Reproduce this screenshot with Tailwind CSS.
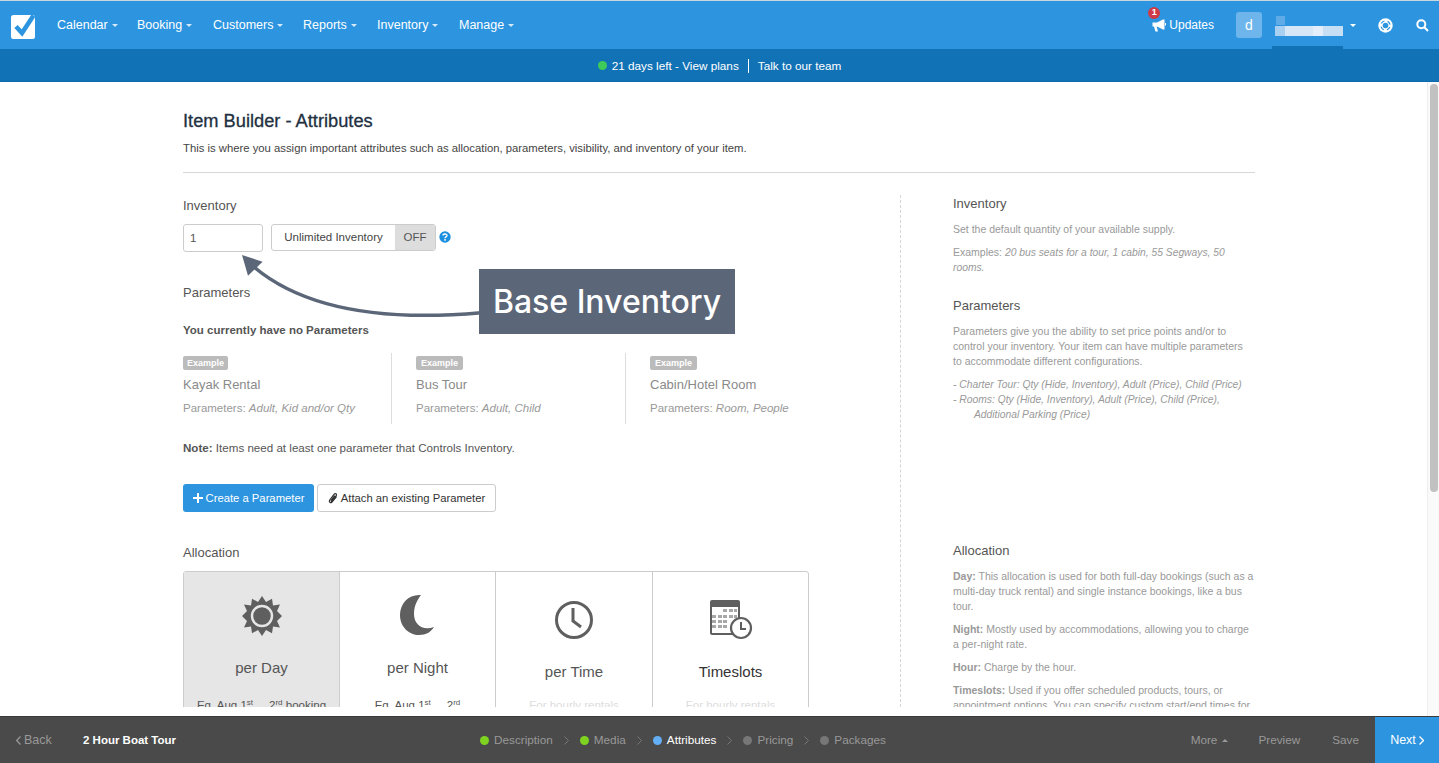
<!DOCTYPE html>
<html lang="en">
  <head>
    <meta charset="UTF-8" />
    <title>Item Builder - Attributes</title>
    <script src="https://cdn.jsdelivr.net/npm/@tailwindcss/browser@4"></script>
  </head>
  <body class="h-[763px] w-[1439px] overflow-hidden bg-white font-['Liberation_Sans',Arial,sans-serif] text-[#555]">
    <div class="relative flex h-[763px] flex-col">
      <!-- TOP NAV -->
      <header class="flex h-[49px] shrink-0 items-center border-t border-[#c9d6e0] border-b-[#2a86c8] bg-[#2d95e0] text-[12.5px] text-white">
        <svg class="ml-[10px] mt-[1px] h-[28px] w-[27px]" viewBox="0 0 27 28">
          <rect x="1" y="3" width="24" height="24" rx="2.5" fill="#fff" />
          <path d="M6 14.5 L12 21 L23.5 3.5" fill="none" stroke="#2d95e0" stroke-width="4.5" />
        </svg>
        <nav class="ml-[20px] flex">
          <a class="flex w-[80px] items-center gap-[4px]">Calendar <i class="mt-[1px] border-x-[3px] border-t-[3px] border-x-transparent border-t-white/80"></i></a>
          <a class="flex w-[76px] items-center gap-[4px]">Booking <i class="mt-[1px] border-x-[3px] border-t-[3px] border-x-transparent border-t-white/80"></i></a>
          <a class="flex w-[90px] items-center gap-[4px]">Customers <i class="mt-[1px] border-x-[3px] border-t-[3px] border-x-transparent border-t-white/80"></i></a>
          <a class="flex w-[74px] items-center gap-[4px]">Reports <i class="mt-[1px] border-x-[3px] border-t-[3px] border-x-transparent border-t-white/80"></i></a>
          <a class="flex w-[82px] items-center gap-[4px]">Inventory <i class="mt-[1px] border-x-[3px] border-t-[3px] border-x-transparent border-t-white/80"></i></a>
          <a class="flex items-center gap-[4px]">Manage <i class="mt-[1px] border-x-[3px] border-t-[3px] border-x-transparent border-t-white/80"></i></a>
        </nav>
        <div class="ml-auto flex h-full items-center">
          <div class="relative flex items-center gap-[3px] text-[12px]">
            <span class="absolute -top-[9px] -left-[4px] flex h-[12px] w-[12px] items-center justify-center rounded-full bg-[#cf3a48] text-[9px] font-bold">1</span>
            <svg class="mt-[1px] h-[13px] w-[14px]" viewBox="0 0 14 13" fill="#fff">
              <path d="M0.5 3.5 H5 L11 0.5 H12.5 V10.5 H11 L5 7.5 H4.6 L6 12.5 H3.4 L2 7.5 H0.5 Z" />
              <rect x="13" y="4" width="1" height="2.5" />
            </svg>
            <span>Updates</span>
          </div>
          <div class="ml-[22px] flex h-[26px] w-[26px] items-center justify-center rounded-[3px] bg-[#6db5ea] text-[14px]">d</div>
          <div class="relative ml-[10px] h-full w-[71px]">
            <div class="absolute top-[15px] left-[4px] h-[9px] w-[9px] bg-[#5fabe8]"></div>
            <div class="absolute top-[25px] left-[3px] flex h-[10px] w-[68px]">
              <div class="w-[10px] bg-[#a9d0f0]"></div>
              <div class="w-[28px] bg-[#d6e7f7]"></div>
              <div class="w-[10px] bg-[#e3eefa]"></div>
              <div class="w-[20px] bg-[#c6dff5]"></div>
            </div>
            <div class="absolute bottom-0 left-0 h-[3px] w-[71px] bg-[#1272b6]"></div>
          </div>
          <i class="ml-[7px] border-x-[3px] border-t-[3px] border-x-transparent border-t-white"></i>
          <svg class="ml-[22px] h-[15px] w-[15px]" viewBox="0 0 15 15">
            <circle cx="7.5" cy="7.5" r="7.2" fill="#fff" />
            <circle cx="7.5" cy="7.5" r="2.8" fill="#2d95e0" />
            <circle cx="7.5" cy="7.5" r="4.6" fill="none" stroke="#2d95e0" stroke-width="1.2" stroke-dasharray="4 3.23" stroke-dashoffset="-1.6" />
          </svg>
          <svg class="mr-[10px] ml-[23px] h-[13px] w-[13px]" viewBox="0 0 13 13" fill="none" stroke="#fff" stroke-width="2">
            <circle cx="5.3" cy="5.3" r="4" />
            <path d="M8.3 8.3 L12 12" />
          </svg>
        </div>
      </header>

      <!-- TRIAL BAR -->
      <div class="flex h-[33px] shrink-0 items-center justify-center border-b border-[#0f6aab] bg-[#1272b6] pt-[1px] text-[11.75px] text-white">
        <span class="mr-[5px] h-[9px] w-[9px] rounded-full bg-[#3ecb5a]"></span>
        <span>21 days left - View plans</span>
        <span class="mx-[9px] h-[14px] w-px bg-white"></span>
        <span>Talk to our team</span>
      </div>

      <!-- MAIN -->
      <div class="relative flex min-h-0 flex-1 bg-white">
        <main class="h-[625px] min-w-0 flex-1 overflow-hidden pt-[28px] pl-[183px]">
          <div class="w-[1072px]">
            <h1 class="text-[18.25px] leading-[22px] text-[#22303f] [-webkit-text-stroke:0.3px_#22303f]">Item Builder - Attributes</h1>
            <p class="mt-[8px] text-[11.3px] leading-[16px] text-[#444]">This is where you assign important attributes such as allocation, parameters, visibility, and inventory of your item.</p>
            <hr class="mt-[16px] border-[#d8d8d8]" />
          </div>

          <div class="mt-[22px] flex">
            <section class="w-[717px]">
              <h3 class="mt-[3px] text-[13px] leading-[16px]">Inventory</h3>
              <div class="mt-[10px] flex items-start">
                <div class="flex h-[28px] w-[80px] items-center rounded-[3px] border border-[#ccc] pl-[6px] pt-[1px] text-[11.5px]">1</div>
                <div class="ml-[8px] flex h-[27px] w-[165px] overflow-hidden rounded-[3px] border border-[#ccc] text-[11.5px]">
                  <span class="flex w-[123px] items-center justify-center text-[#444]">Unlimited Inventory</span>
                  <span class="flex flex-1 items-center justify-center bg-[#ddd]">OFF</span>
                </div>
                <svg class="mt-[7px] ml-[3px] h-[12px] w-[12px]" viewBox="0 0 12 12">
                  <circle cx="6" cy="6" r="5.7" fill="#1b8fe0" />
                  <path d="M4 4.6 C4 2.4 8 2.4 8 4.5 C8 6 6 5.8 6 7.2" fill="none" stroke="#fff" stroke-width="1.4" />
                  <rect x="5.2" y="8.1" width="1.6" height="1.6" fill="#fff" />
                </svg>
              </div>

              <h3 class="mt-[33px] text-[13px] leading-[16px]">Parameters</h3>
              <p class="mt-[21px] text-[11.5px] leading-[16px] font-bold">You currently have no Parameters</p>

              <div class="mt-[15px] flex h-[71px] text-[#999]">
                <div class="w-[208px] pt-[3px]">
                  <span class="block w-fit rounded-[2px] bg-[#bbb] px-[4px] text-[9px] leading-[14px] font-bold text-white">Example</span>
                  <div class="mt-[7px] text-[13px] leading-[16px] text-[#8a8a8a]">Kayak Rental</div>
                  <div class="mt-[7px] text-[11.5px] leading-[16px]">Parameters: <em>Adult, Kid and/or Qty</em></div>
                </div>
                <div class="w-[234px] border-l border-[#ddd] pt-[3px] pl-[24px]">
                  <span class="block w-fit rounded-[2px] bg-[#bbb] px-[5px] text-[9px] leading-[14px] font-bold text-white">Example</span>
                  <div class="mt-[7px] text-[13px] leading-[16px] text-[#8a8a8a]">Bus Tour</div>
                  <div class="mt-[7px] text-[11.5px] leading-[16px]">Parameters: <em>Adult, Child</em></div>
                </div>
                <div class="border-l border-[#ddd] pt-[3px] pl-[24px]">
                  <span class="block w-fit rounded-[2px] bg-[#bbb] px-[5px] text-[9px] leading-[14px] font-bold text-white">Example</span>
                  <div class="mt-[7px] text-[13px] leading-[16px] text-[#8a8a8a]">Cabin/Hotel Room</div>
                  <div class="mt-[7px] text-[11.5px] leading-[16px]">Parameters: <em>Room, People</em></div>
                </div>
              </div>

              <p class="mt-[16px] text-[11.6px] leading-[16px]"><b>Note:</b> Items need at least one parameter that Controls Inventory.</p>

              <div class="mt-[28px] flex gap-[3px] text-[11.25px]">
                <button class="flex h-[28px] w-[131px] items-center justify-center gap-[3px] rounded-[3px] bg-[#2d95e0] text-white">
                  <svg class="h-[10px] w-[10px]" viewBox="0 0 10 10"><path d="M5 0 V10 M0 5 H10" stroke="#fff" stroke-width="2" /></svg>
                  Create a Parameter
                </button>
                <button class="flex h-[28px] w-[179px] items-center justify-center gap-[3px] rounded-[3px] border border-[#ccc] text-[#333]">
                  <svg class="h-[12px] w-[10px]" viewBox="0 0 10 12" fill="none" stroke="#333" stroke-width="1.2">
                    <path d="M8.5 4.5 L4 10 C2.5 11.5 0.5 10 1.7 8 L6 2.4 C7.2 0.8 9.3 2 8.2 3.7 L4.2 8.7 C3.5 9.4 2.8 8.8 3.3 8 L6.8 3.6" />
                  </svg>
                  Attach an existing Parameter
                </button>
              </div>

              <h3 class="mt-[33px] text-[13px] leading-[16px]">Allocation</h3>
              <div class="mt-[10px] grid h-[180px] w-[626px] grid-cols-[155px_156px_157px_1fr] rounded-[3px] border border-[#ccc] text-center">
                <div class="bg-[#e6e6e6] pt-[24px]">
                  <svg class="mx-auto h-[40px] w-[40px]" viewBox="0 0 40 40">
                    <path fill="#5f5f5f" d="M20 0 L24 6 L30 2.7 L31 9.5 L38 8.5 L35 15 L40 20 L35 25 L38 31.5 L31 30.5 L30 37.3 L24 34 L20 40 L16 34 L10 37.3 L9 30.5 L2 31.5 L5 25 L0 20 L5 15 L2 8.5 L9 9.5 L10 2.7 L16 6 Z" />
                    <circle cx="20" cy="20" r="10" fill="#5f5f5f" stroke="#e6e6e6" stroke-width="2.4" />
                  </svg>
                  <div class="mt-[22px] text-[15px] leading-[20px]">per Day</div>
                  <div class="mt-[19px] text-[11.5px] leading-[16px]">Eg. Aug 1<sup class="text-[8px]">st</sup> &nbsp;&nbsp;&nbsp; 2<sup class="text-[8px]">rd</sup> booking</div>
                </div>
                <div class="border-l border-[#ccc] pt-[22px]">
                  <svg class="mx-auto h-[42px] w-[38px]" viewBox="0 0 38 42">
                    <path fill="#5f5f5f" d="M22 1 C10 0 1 9 1 21 C1 33 10 41 20 41 C27 41 32 38 35 33 C24 37 15 31 15 20 C15 11 19 5 22 1 Z" />
                  </svg>
                  <div class="mt-[22px] text-[15px] leading-[20px]">per Night</div>
                  <div class="mt-[19px] text-[11.5px] leading-[16px]">Eg. Aug 1<sup class="text-[8px]">st</sup> &nbsp;&nbsp;&nbsp; 2<sup class="text-[8px]">rd</sup></div>
                </div>
                <div class="border-l border-[#ccc] pt-[28px]">
                  <svg class="mx-auto h-[40px] w-[40px]" viewBox="0 0 40 40" fill="none" stroke="#5f5f5f">
                    <circle cx="20" cy="20" r="17.5" stroke-width="3" />
                    <path d="M19 8 V21 L27 27" stroke-width="3" />
                  </svg>
                  <div class="mt-[22px] text-[15px] leading-[20px]">per Time</div>
                  <div class="mt-[15px] text-[11.5px] leading-[16px] text-[#ddd]">For hourly rentals</div>
                </div>
                <div class="border-l border-[#ccc] pt-[28px]">
                  <svg class="mx-auto h-[40px] w-[44px]" viewBox="0 0 44 40">
                    <rect x="1" y="0" width="30" height="35" rx="2" fill="#5f5f5f" />
                    <rect x="3" y="7" width="26" height="26" fill="#fff" />
                    <path fill="#a8a8a8" d="M14 9h4v3h-4zM20 9h4v3h-4zM25 9h3v3h-3zM3 15h4v3H3zM9 15h4v3H9zM14 15h4v3h-4zM20 15h4v3h-4zM25 15h3v3h-3zM3 20h4v3H3zM9 20h4v3H9zM14 20h4v3h-4zM3 25h4v3H3zM9 25h4v3H9zM14 25h4v3h-4z" />
                    <circle cx="32" cy="28" r="10" fill="#fff" stroke="#5f5f5f" stroke-width="2.2" />
                    <path d="M32 22 V29 H37" fill="none" stroke="#5f5f5f" stroke-width="2" />
                  </svg>
                  <div class="mt-[22px] text-[15px] leading-[20px] text-[#333]">Timeslots</div>
                  <div class="mt-[15px] text-[11.5px] leading-[16px] text-[#ddd]">For hourly rentals</div>
                </div>
              </div>
            </section>

            <!-- HELP COLUMN -->
            <aside class="h-[512px] border-l border-dashed border-[#d5d5d5] pl-[52px] text-[#999]">
              <h3 class="mt-[1px] text-[13px] leading-[16px] text-[#555]">Inventory</h3>
              <p class="mt-[10px] text-[10.5px] leading-[15px]">Set the default quantity of your available supply.</p>
              <p class="mt-[8px] w-[290px] text-[10.5px] leading-[15px]">Examples: <em class="text-[10.3px]">20 bus seats for a tour, 1 cabin, 55 Segways, 50 rooms.</em></p>

              <h3 class="mt-[23px] text-[13px] leading-[16px] text-[#555]">Parameters</h3>
              <p class="mt-[10px] w-[290px] text-[10.5px] leading-[15px]">Parameters give you the ability to set price points and/or to control your inventory. Your item can have multiple parameters to accommodate different configurations.</p>
              <p class="mt-[8px] text-[10.3px] leading-[15px] italic">- Charter Tour: Qty (Hide, Inventory), Adult (Price), Child (Price)<br />- Rooms: Qty (Hide, Inventory), Adult (Price), Child (Price),<br /><span class="pl-[21px]">Additional Parking (Price)</span></p>

              <h3 class="mt-[121px] text-[13px] leading-[16px] text-[#555]">Allocation</h3>
              <p class="mt-[10px] w-[302px] text-[10.5px] leading-[15px]"><b>Day:</b> This allocation is used for both full-day bookings (such as a multi-day truck rental) and single instance bookings, like a bus tour.</p>
              <p class="mt-[8px] w-[302px] text-[10.5px] leading-[15px]"><b>Night:</b> Mostly used by accommodations, allowing you to charge a per-night rate.</p>
              <p class="mt-[8px] text-[10.5px] leading-[15px]"><b>Hour:</b> Charge by the hour.</p>
              <p class="mt-[8px] w-[302px] text-[10.5px] leading-[15px]"><b>Timeslots:</b> Used if you offer scheduled products, tours, or appointment options. You can specify custom start/end times for</p>
            </aside>
          </div>
        </main>

        <!-- SCROLLBAR -->
        <div class="flex w-[12px] shrink-0 justify-center border-l border-[#eee] bg-[#fafafa] pt-[2px]">
          <div class="h-[408px] w-[8px] rounded-full bg-[#c1c1c1]"></div>
        </div>

        <!-- CALLOUT -->
        <div class="absolute top-[187px] left-[479px] flex h-[65px] w-[256px] items-center justify-center bg-[#5b6678] font-['Inter',sans-serif] text-[32px] font-medium text-white">Base Inventory</div>
        <svg class="absolute top-[170px] left-[240px] h-[75px] w-[242px]" viewBox="0 0 242 75" fill="none">
          <path d="M241 60.7 C160 68 70 62 14 15" stroke="#5b6678" stroke-width="3.5" />
          <path d="M2 3 L22.6 9.7 L8 23.7 Z" fill="#5b6678" />
        </svg>
      </div>

      <!-- BOTTOM BAR -->
      <footer class="flex h-[47px] shrink-0 items-center border-t border-[#3a3a3a] bg-[#4a4a4a] text-[11.75px] text-[#999]">
        <span class="ml-[16px] flex w-[67px] items-center gap-[3px] text-[12.5px]">
          <svg class="h-[9px] w-[5px]" viewBox="0 0 5 9" fill="none" stroke="#999" stroke-width="1.2"><path d="M4.5 0.5 L0.7 4.5 L4.5 8.5" /></svg>
          Back
        </span>
        <span class="w-[383px] pt-[1px] text-[11.5px] font-bold text-white">2 Hour Boat Tour</span>
        <div class="ml-[14px] flex items-center">
          <i class="mr-[5px] h-[9px] w-[9px] rounded-full bg-[#7ed321]"></i><span>Description</span>
          <svg class="mx-[11px] h-[9px] w-[5px]" viewBox="0 0 5 9" fill="none" stroke="#777"><path d="M0.5 0.5 L4.5 4.5 L0.5 8.5" /></svg>
          <i class="mr-[5px] h-[9px] w-[9px] rounded-full bg-[#7ed321]"></i><span>Media</span>
          <svg class="mx-[11px] h-[9px] w-[5px]" viewBox="0 0 5 9" fill="none" stroke="#777"><path d="M0.5 0.5 L4.5 4.5 L0.5 8.5" /></svg>
          <i class="mr-[5px] h-[9px] w-[9px] rounded-full bg-[#63aef5]"></i><span class="text-white">Attributes</span>
          <svg class="mx-[11px] h-[9px] w-[5px]" viewBox="0 0 5 9" fill="none" stroke="#777"><path d="M0.5 0.5 L4.5 4.5 L0.5 8.5" /></svg>
          <i class="mr-[5px] h-[9px] w-[9px] rounded-full bg-[#777]"></i><span>Pricing</span>
          <svg class="mx-[11px] h-[9px] w-[5px]" viewBox="0 0 5 9" fill="none" stroke="#777"><path d="M0.5 0.5 L4.5 4.5 L0.5 8.5" /></svg>
          <i class="mr-[5px] h-[9px] w-[9px] rounded-full bg-[#777]"></i><span>Packages</span>
        </div>
        <div class="ml-auto flex h-full items-center">
          <span class="flex items-center gap-[5px]">More <i class="border-x-[3px] border-b-[3px] border-x-transparent border-b-[#999]"></i></span>
          <span class="ml-[30px]">Preview</span>
          <span class="ml-[32px]">Save</span>
          <span class="ml-[16px] flex h-full w-[64px] items-center justify-center gap-[3px] bg-[#2d95e0] text-[12.5px] text-white">Next
            <svg class="h-[9px] w-[5px]" viewBox="0 0 5 9" fill="none" stroke="#fff" stroke-width="1.3"><path d="M0.5 0.5 L4.5 4.5 L0.5 8.5" /></svg>
          </span>
        </div>
      </footer>
    </div>
  </body>
</html>
